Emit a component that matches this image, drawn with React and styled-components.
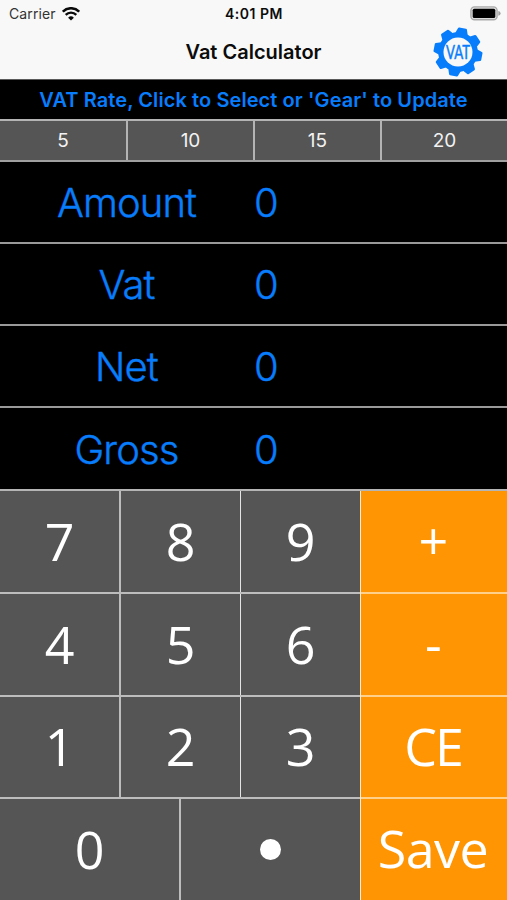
import * as React from "react";
import styled, { createGlobalStyle } from "styled-components";

const rates = [5, 10, 15, 20];

const totals = [
  { label: "Amount", value: "0" },
  { label: "Vat", value: "0" },
  { label: "Net", value: "0" },
  { label: "Gross", value: "0" },
];

const digitRows = [
  [7, 8, 9],
  [4, 5, 6],
  [1, 2, 3],
];

const teeth = [0, 45, 90, 135, 180, 225, 270, 315];

const WifiIcon = () => (
  <svg width="18" height="14" viewBox="0 0 18 14" fill="none" stroke="#0a0a0a">
    <path d="M0.8 4.7 A11.5 11.5 0 0 1 17.2 4.7" strokeWidth="2.6" />
    <path d="M3.7 7.9 A7.4 7.4 0 0 1 14.3 7.9" strokeWidth="2.3" />
    <path d="M9 13.6 L6.1 10.7 A4.1 4.1 0 0 1 11.9 10.7 Z" fill="#0a0a0a" stroke="none" />
  </svg>
);

const BatteryIcon = () => (
  <svg width="31" height="15" viewBox="0 0 31 15">
    <rect x="0.9" y="0.9" width="26.2" height="12.9" rx="3.6" fill="#dcdcdc" stroke="#a9a9a9" strokeWidth="1.4" />
    <rect x="2.7" y="2.7" width="22.6" height="9.3" rx="1.6" fill="#000" />
    <path d="M28.3 5 Q30.6 5.4 30.6 7.4 Q30.6 9.3 28.3 9.8 Z" fill="#a0a0a0" />
  </svg>
);

const GearIcon = () => (
  <svg width="50" height="50" viewBox="-25 -25 50 50">
    <g fill="#087dfb" transform="rotate(11)">
      <circle r="19.8" />
      {teeth.map(angle => (
        <path
          key={angle}
          d="M-6.4 -18 L-4.6 -23.4 Q-4.3 -24.3 -3.4 -24.3 H3.4 Q4.3 -24.3 4.6 -23.4 L6.4 -18 Z"
          transform={`rotate(${angle})`}
        />
      ))}
    </g>
    <circle r="14.5" fill="#f8f8f8" />
    <text
      y="7"
      textAnchor="middle"
      textLength="24"
      lengthAdjust="spacingAndGlyphs"
      fontFamily="Lato, sans-serif"
      fontSize="18.5"
      fill="#087dfb"
      stroke="#087dfb"
      strokeWidth="0.5"
    >
      VAT
    </text>
  </svg>
);

const App = () => {
  return (
    <Screen>
      <GlobalStyle />
      <Header>
        <StatusBar>
          <Carrier>
            Carrier <WifiIcon />
          </Carrier>
          <Clock>4:01 PM</Clock>
          <Battery>
            <BatteryIcon />
          </Battery>
        </StatusBar>
        <NavBar>
          <Title>Vat Calculator</Title>
          <Settings aria-label="Update rates">
            <GearIcon />
          </Settings>
        </NavBar>
      </Header>
      <Hint>VAT Rate, Click to Select or 'Gear' to Update</Hint>
      <Rates>
        {rates.map(rate => (
          <Rate key={rate}>{rate}</Rate>
        ))}
      </Rates>
      <Totals>
        {totals.map(({ label, value }) => (
          <Total key={label}>
            <TotalLabel>{label}</TotalLabel>
            <TotalValue>{value}</TotalValue>
          </Total>
        ))}
      </Totals>
      <Keypad>
        <Digits>
          {digitRows.map(row => (
            <KeyRow key={row[0]}>
              {row.map(digit => (
                <Key key={digit}>{digit}</Key>
              ))}
            </KeyRow>
          ))}
          <KeyRow>
            <Key>0</Key>
            <Key aria-label="Decimal point">
              <Dot />
            </Key>
          </KeyRow>
        </Digits>
        <Actions>
          <Action>+</Action>
          <Action>-</Action>
          <Action $spacing="-2px">CE</Action>
          <Action>Save</Action>
        </Actions>
      </Keypad>
    </Screen>
  );
};

const GlobalStyle = createGlobalStyle`
  * {
    box-sizing: border-box;
  }

  body {
    margin: 0;
    background: #000;
  }

  button {
    margin: 0;
    padding: 0;
    border: 0;
    border-radius: 0;
    font: inherit;
    color: inherit;
  }
`;

const Screen = styled.div`
  display: flex;
  flex-direction: column;
  width: 507px;
  height: 900px;
  overflow: hidden;
  background: #000;
  font-family: Inter, sans-serif;
`;

const Header = styled.header`
  flex: 0 0 80px;
  background: #f8f8f8;
  border-bottom: 1px solid #5a5a5a;
  color: #0c0c0c;
`;

const StatusBar = styled.div`
  display: grid;
  grid-template-columns: 1fr auto 1fr;
  align-items: center;
  height: 27px;
  padding: 0 6px 0 9px;
  font-size: 14px;
`;

const Carrier = styled.div`
  display: flex;
  align-items: center;
  gap: 6px;
  color: #333;
  letter-spacing: 0.1px;
`;

const Clock = styled.div`
  margin-left: -2px;
  font-weight: 600;
  font-size: 14px;
  letter-spacing: 0.5px;
`;

const Battery = styled.div`
  display: flex;
  justify-content: flex-end;
`;

const NavBar = styled.div`
  display: grid;
  grid-template-columns: 1fr auto 1fr;
  align-items: center;
  height: 50px;
  padding: 0 24px;
`;

const Title = styled.h1`
  grid-column: 2;
  margin: 0;
  font-size: 20px;
  font-weight: 600;
`;

const Settings = styled.button`
  justify-self: end;
  display: flex;
  background: none;
`;

const Hint = styled.div`
  display: flex;
  flex: 0 0 39px;
  align-items: center;
  justify-content: center;
  color: #087dfb;
  font-size: 20px;
  font-weight: 600;
  letter-spacing: 0.08px;
  white-space: nowrap;
`;

const Rates = styled.div`
  display: grid;
  grid-template-columns: 126px 127px 127px 1fr;
  flex: 0 0 43px;
  border-top: 2px solid #b4b4b4;
  border-bottom: 2px solid #a0a0a0;
`;

const Rate = styled.button`
  background: #555;
  color: #f2f2f2;
  font-size: 19px;

  & + & {
    border-left: 2px solid #b4b4b4;
  }
`;

const Totals = styled.div`
  display: grid;
  grid-template-rows: 80px 82px 82px 83px;
  flex: 0 0 327px;
`;

const Total = styled.div`
  display: grid;
  grid-template-columns: 253px 1fr;
  align-items: center;
  padding-top: 1px;
  color: #087dfb;
  font-size: 40px;
  font-weight: 300;
  -webkit-text-stroke: 0.4px #087dfb;

  & + & {
    border-top: 2px solid #999;
  }
`;

const TotalLabel = styled.div`
  text-align: center;
  letter-spacing: -0.9px;
`;

const TotalValue = styled.div`
  padding-left: 1px;
`;

const Keypad = styled.div`
  display: flex;
  flex: 1;
  border-top: 2px solid #b5b5b5;
  color: #fff;
  font-family: "Open Sans", "Noto Sans", sans-serif;
  font-size: 52px;
  line-height: 1;
`;

const Digits = styled.div`
  display: grid;
  grid-template-rows: 101px 103px 102px 1fr;
  flex: 0 0 360px;
`;

const KeyRow = styled.div`
  display: flex;

  & + & {
    border-top: 2px solid #bdbdbd;
  }
`;

const Key = styled.button`
  display: flex;
  flex: 1 1 0;
  align-items: center;
  justify-content: center;
  padding-bottom: 2px;
  background: #555;

  & + & {
    border-left: 2px solid #bdbdbd;
  }

  &:nth-child(3) {
    border-left: 1px solid #e4e4e4;
  }
`;

const Dot = styled.span`
  width: 21px;
  height: 21px;
  margin-top: 2px;
  border-radius: 50%;
  background: #fff;
`;

const Actions = styled.div`
  display: grid;
  grid-template-rows: 101px 103px 102px 1fr;
  flex: 1;
  border-left: 1px solid #f4ead8;
`;

const Action = styled.button`
  padding: 0 2px 3px 0;
  background: #ff9502;
  letter-spacing: ${({ $spacing }) => $spacing || "-0.5px"};

  & + & {
    border-top: 2px solid #ffd08a;
  }
`;

export default App;
